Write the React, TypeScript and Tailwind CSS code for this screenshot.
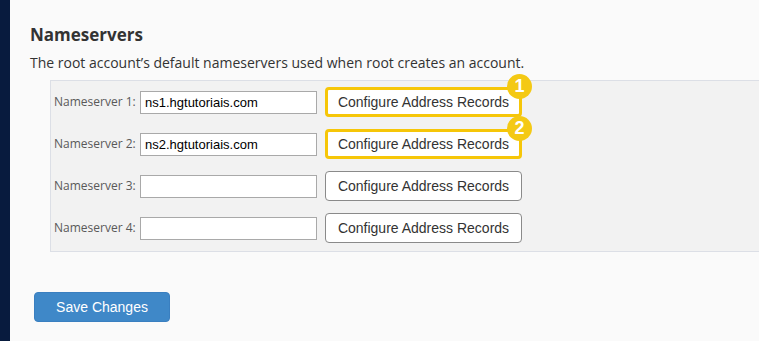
import React from "react";

// Nameserver rows; the first two are highlighted with numbered callouts
const rows = [
  { label: "Nameserver 1:", value: "ns1.hgtutoriais.com", badge: "1" },
  { label: "Nameserver 2:", value: "ns2.hgtutoriais.com", badge: "2" },
  { label: "Nameserver 3:", value: "", badge: "" },
  { label: "Nameserver 4:", value: "", badge: "" },
];

const openSans = "font-['Open_Sans','Liberation_Sans',sans-serif]";
const arial = "font-['Liberation_Sans',Arial,sans-serif]";

const App = () => (
  <div className="flex min-h-[341px] w-[759px] overflow-hidden bg-[#fafafa]">
    <aside className="w-[10px] shrink-0 bg-[#081b3e]" />
    <main className="flex-1 pl-5">
      <h2 className={`${openSans} mt-[23px] text-[17px] font-bold leading-[23px] text-[#333]`}>
        Nameservers
      </h2>
      <p className={`${openSans} mt-[7px] text-[14px] leading-5 text-[#333]`}>
        The root account’s default nameservers used when root creates an account.
      </p>
      <div className="mt-[7px] ml-5 -mr-10 border border-[#dcdfe6] bg-[#f2f2f2] pb-[2px]">
        {rows.map((row) => (
          <div key={row.label} className="flex h-[42px] items-center">
            <label className={`${openSans} w-[89px] shrink-0 pl-[3px] text-[12px] text-[#595959]`}>
              {row.label}
            </label>
            <input
              readOnly
              value={row.value}
              className={`${arial} h-[23px] w-[177px] border border-[#a9a9a9] bg-white px-[4px] text-[13px] text-black outline-none`}
            />
            <div className="relative ml-[8px]">
              <button
                className={`${arial} flex h-[30px] w-[197px] items-center justify-center rounded-[4px] bg-white text-[14px] text-[#333] ${
                  row.badge ? "border-[3px] border-[#f6c608]" : "border border-[#8a8a8a]"
                }`}
              >
                Configure Address Records
              </button>
              {row.badge && (
                <span
                  className={`${arial} absolute -top-[13px] left-[182px] flex h-[25px] w-[25px] items-center justify-center rounded-full bg-[#f4c914] text-[18px] font-bold text-white`}
                >
                  {row.badge}
                </span>
              )}
            </div>
          </div>
        ))}
      </div>
      <button
        className={`${arial} mt-10 ml-[4px] h-[30px] w-[136px] rounded-[4px] border border-[#3a7fc0] bg-[#3f88c8] text-[14px] text-white`}
      >
        Save Changes
      </button>
    </main>
  </div>
);

export default App;
